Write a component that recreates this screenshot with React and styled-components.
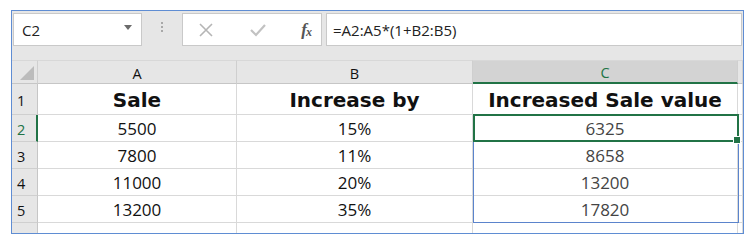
import React from "react";
import styled, {createGlobalStyle} from "styled-components";

const GlobalStyle = createGlobalStyle`
  body {
    margin: 0;
    background: #ffffff;
    font-family: "Open Sans", "Liberation Sans", sans-serif;
  }
`

const columns = [
    {key: "A", width: 199},
    {key: "B", width: 236},
    {key: "C", width: 265},
]

const header = ["Sale", "Increase by", "Increased Sale value"]

const data = [
    ["5500", "15%", "6325"],
    ["7800", "11%", "8658"],
    ["11000", "20%", "13200"],
    ["13200", "35%", "17820"],
]

const ROW_HEAD = 26
const HEAD_ROW = 31
const ROW = 27

const App = () => {
    const gridCols = `${ROW_HEAD}px ${columns.map(c => c.width + "px").join(" ")} 1fr`
    const selLeft = ROW_HEAD + columns[0].width + columns[1].width

    return (
        <>
            <GlobalStyle/>
            <Frame>
                <Toolbar>
                    <NameBox>
                        <span>C2</span>
                        <DropArrow/>
                    </NameBox>
                    <Grip>
                        <i/><i/><i/>
                    </Grip>
                    <FuncBox>
                        <svg width="16" height="16" viewBox="0 0 16 16">
                            <path d="M2 2 L14 14 M14 2 L2 14" stroke="#b5b5b5" strokeWidth="1.6" fill="none"/>
                        </svg>
                        <svg width="18" height="16" viewBox="0 0 18 16">
                            <path d="M2 8 L7 13 L16 3" stroke="#c2c2c2" strokeWidth="2.2" fill="none"/>
                        </svg>
                        <Fx>f<sub>x</sub></Fx>
                    </FuncBox>
                    <FormulaBox>=A2:A5*(1+B2:B5)</FormulaBox>
                </Toolbar>
                <Sheet>
                    <Row $cols={gridCols} $h={24}>
                        <Corner>
                            <svg width="14" height="14" viewBox="0 0 14 14">
                                <polygon points="14,0 14,14 0,14" fill="#bcbcbc"/>
                            </svg>
                        </Corner>
                        {columns.map(c => (
                            <ColHead key={c.key} $active={c.key === "C"}>{c.key}</ColHead>
                        ))}
                        <ColHead/>
                    </Row>
                    <Body>
                        <Row $cols={gridCols} $h={HEAD_ROW}>
                            <RowHead>1</RowHead>
                            {header.map(t => <Cell key={t} $bold>{t}</Cell>)}
                            <Cell/>
                        </Row>
                        {data.map((r, i) => (
                            <Row key={i} $cols={gridCols} $h={ROW}>
                                <RowHead $active={i === 0}>{i + 2}</RowHead>
                                <Cell>{r[0]}</Cell>
                                <Cell>{r[1]}</Cell>
                                <Cell $dim>{r[2]}</Cell>
                                <Cell/>
                            </Row>
                        ))}
                        <Row $cols={gridCols} $h={ROW}>
                            <RowHead>6</RowHead>
                            <Cell/><Cell/><Cell/><Cell/>
                        </Row>
                        <RangeBox style={{left: selLeft, top: HEAD_ROW - 1, width: columns[2].width + 1, height: ROW * 4 + 1}}/>
                        <ActiveBox style={{left: selLeft, top: HEAD_ROW - 1, width: columns[2].width + 1, height: ROW + 1}}>
                            <Handle/>
                        </ActiveBox>
                    </Body>
                </Sheet>
            </Frame>
        </>
    )
}
export default App


const Frame = styled.div`
  margin: 10px 0 0 11px;
  width: 731px;
  height: 222px;
  border: 1px solid #5f8dd3;
  overflow: hidden;
  background: #e6e6e6;
`

const Toolbar = styled.div`
  display: flex;
  align-items: flex-start;
  height: 49px;
  padding: 2px 1px 0 1px;
  box-sizing: border-box;
  background: #e6e6e6;
`

const Box = styled.div`
  height: 33px;
  box-sizing: border-box;
  background: #ffffff;
  border: 1px solid #c9c9c9;
  display: flex;
  align-items: center;
  font-size: 15px;
  color: #222;
`

const NameBox = styled(Box)`
  width: 129px;
  padding: 0 9px 0 8px;
  justify-content: space-between;
`

const DropArrow = styled.span`
  width: 0;
  height: 0;
  border-left: 4px solid transparent;
  border-right: 4px solid transparent;
  border-top: 5px solid #6b6b6b;
  margin-top: -4px;
`

const Grip = styled.div`
  width: 40px;
  height: 33px;
  display: flex;
  flex-direction: column;
  align-items: center;
  justify-content: center;
  gap: 2px;
  margin-top: -3px;

  i {
    display: block;
    width: 2px;
    height: 2px;
    background: #a8a8a8;
  }
`

const FuncBox = styled(Box)`
  width: 140px;
  padding: 0 10px 0 15px;
  justify-content: space-between;
`

const Fx = styled.span`
  font-family: "Liberation Serif", serif;
  font-style: italic;
  font-weight: bold;
  font-size: 17px;
  color: #555;
  letter-spacing: -1px;

  sub {
    font-size: 12px;
    vertical-align: -1px;
  }
`

const FormulaBox = styled(Box)`
  flex: 1;
  margin-left: 4px;
  padding-left: 6px;
  font-size: 15px;
  color: #222;
`

const Sheet = styled.div`
  background: #ffffff;
`

const Body = styled.div`
  position: relative;
`

const Row = styled.div`
  display: grid;
  grid-template-columns: ${p => p.$cols};
  height: ${p => p.$h}px;
`

const Corner = styled.div`
  background: #e6e6e6;
  border-right: 1px solid #cfcfcf;
  border-bottom: 1px solid #c6c6c6;
  border-top: 1px solid #d8d8d8;
  display: flex;
  align-items: flex-end;
  justify-content: flex-end;
  padding: 0 3px 3px 0;
`

const ColHead = styled.div`
  background: ${p => p.$active ? "#d3d3d3" : "#e6e6e6"};
  color: ${p => p.$active ? "#217346" : "#111"};
  border-right: 1px solid #cfcfcf;
  border-top: 1px solid #d8d8d8;
  border-bottom: ${p => p.$active ? "2px solid #217346" : "1px solid #c6c6c6"};
  display: flex;
  align-items: center;
  justify-content: center;
  font-size: 14.5px;
  padding-top: 2px;
`

const RowHead = styled.div`
  background: #e6e6e6;
  border-right: ${p => p.$active ? "2px solid #217346" : "1px solid #c6c6c6"};
  border-bottom: 1px solid #cfcfcf;
  display: flex;
  align-items: center;
  padding: 2px 0 0 5px;
  font-size: 14.5px;
  color: ${p => p.$active ? "#217346" : "#111"};
`

const Cell = styled.div`
  border-right: 1px solid #d9d9d9;
  border-bottom: 1px solid #d9d9d9;
  display: flex;
  align-items: center;
  justify-content: center;
  font-family: ${p => p.$bold ? "\"DejaVu Sans\", Lato, sans-serif" : "\"Open Sans\", sans-serif"};
  font-weight: ${p => p.$bold ? 700 : 400};
  font-size: ${p => p.$bold ? "20px" : "17px"};
  padding-top: ${p => p.$bold ? "2px" : "0"};
  color: ${p => p.$dim ? "#444" : "#111"};
  white-space: nowrap;
  overflow: hidden;
`

const RangeBox = styled.div`
  position: absolute;
  box-sizing: border-box;
  border: 1px solid #5b84cc;
  pointer-events: none;
`

const ActiveBox = styled.div`
  position: absolute;
  box-sizing: border-box;
  border: 2px solid #217346;
  pointer-events: none;
`

const Handle = styled.div`
  position: absolute;
  right: -4px;
  bottom: -4px;
  width: 6px;
  height: 6px;
  background: #217346;
  border: 1px solid #ffffff;
`
